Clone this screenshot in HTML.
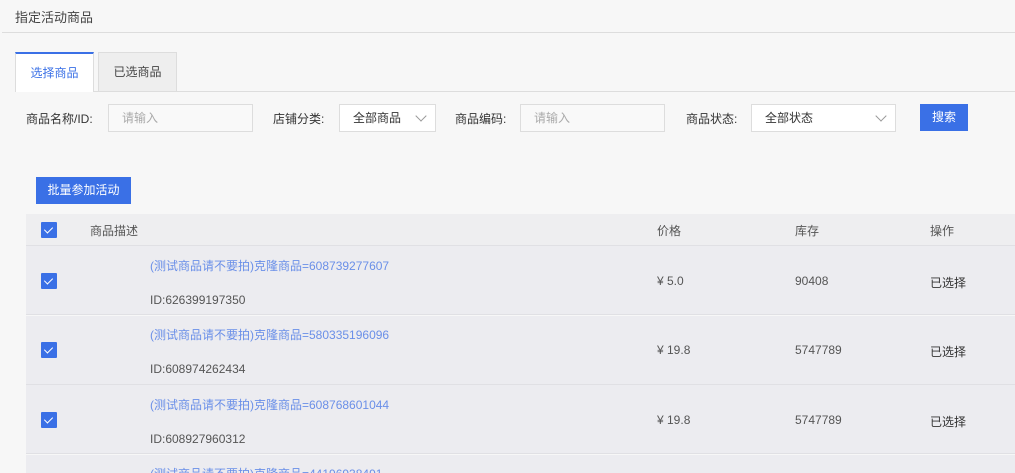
<!DOCTYPE html><html style="width:1015px;height:473px;overflow:hidden"><head><meta charset="utf-8"><style>
*{margin:0;padding:0;box-sizing:border-box}
html,body{width:1015px;height:473px;overflow:hidden}
body{background:#f7f7f7;font-family:"Liberation Sans","Noto Sans CJK SC",sans-serif;font-size:12px;color:#333;position:relative}
.a{position:absolute}
.cb{position:absolute;left:41px;width:16px;height:16px;background:#3a70e6;border-radius:1px}
.cb:after{content:"";position:absolute;left:5px;top:3px;width:4px;height:7px;border:solid #fff;border-width:0 1.5px 1.5px 0;transform:rotate(45deg)}
.inp{position:absolute;height:28px;border:1px solid #ddd;background:#f9f9f9;color:#aaa;padding-left:13px;line-height:26px}
.sel{position:absolute;height:28px;border:1px solid #ddd;background:#fff;color:#333;padding-left:13px;line-height:26px}
.sel i{position:absolute;right:10px;top:7px;width:8px;height:8px;border:solid #999;border-width:0 1px 1px 0;transform:rotate(45deg)}
.row{position:absolute;left:26px;width:989px;height:69px;background:#ececf0;border-bottom:1px solid #e0e0e4}
.t{position:absolute;left:124px;color:#6a8fe8}
.id{position:absolute;left:124px;color:#555}
</style></head><body>
<div class="a" style="left:15px;top:7px;font-size:13px;color:#444">指定活动商品</div>
<div class="a" style="left:2px;top:32px;width:1013px;height:1px;background:#ddd"></div>
<div class="a" style="left:15px;top:91px;width:1000px;height:1px;background:#ddd"></div>
<div class="a" style="left:15px;top:52px;width:79px;height:40px;background:#fff;border:1px solid #ddd;border-top:2px solid #3a70e6;border-bottom:none;color:#3a70e6;text-align:center;line-height:38px">选择商品</div>
<div class="a" style="left:98px;top:52px;width:79px;height:39px;background:#eee;border:1px solid #ddd;border-bottom:none;text-align:center;line-height:39px;color:#444">已选商品</div>
<div class="a" style="left:26px;top:110px">商品名称/ID:</div>
<div class="inp" style="left:108px;top:104px;width:145px">请输入</div>
<div class="a" style="left:273px;top:110px">店铺分类:</div>
<div class="sel" style="left:339px;top:104px;width:97px">全部商品<i></i></div>
<div class="a" style="left:455px;top:110px">商品编码:</div>
<div class="inp" style="left:520px;top:104px;width:145px">请输入</div>
<div class="a" style="left:686px;top:110px">商品状态:</div>
<div class="sel" style="left:751px;top:104px;width:145px">全部状态<i></i></div>
<div class="a" style="left:920px;top:104px;width:48px;height:27px;background:#3a70e6;color:#fff;text-align:center;line-height:27px">搜索</div>
<div class="a" style="left:36px;top:177px;width:95px;height:27px;background:#3a70e6;color:#fff;text-align:center;line-height:27px">批量参加活动</div>
<div class="a" style="left:26px;top:214px;width:989px;height:32px;background:#eeeef0;border-bottom:1px solid #e0e0e4"></div>
<div class="cb" style="top:222px"></div>
<div class="a" style="left:90px;top:222px;color:#555">商品描述</div>
<div class="a" style="left:657px;top:222px;color:#555">价格</div>
<div class="a" style="left:795px;top:222px;color:#555">库存</div>
<div class="a" style="left:930px;top:222px;color:#555">操作</div>

<div class="row" style="top:246px"><div class="t" style="top:11px">(测试商品请不要拍)克隆商品=608739277607</div><div class="id" style="top:47px">ID:626399197350</div></div>
<div class="cb" style="top:273px"></div>
<div class="a" style="left:657px;top:274px;color:#555">¥ 5.0</div><div class="a" style="left:795px;top:274px;color:#555">90408</div><div class="a" style="left:930px;top:274px">已选择</div>

<div class="row" style="top:316px"><div class="t" style="top:10px">(测试商品请不要拍)克隆商品=580335196096</div><div class="id" style="top:46px">ID:608974262434</div></div>
<div class="cb" style="top:342px"></div>
<div class="a" style="left:657px;top:343px;color:#555">¥ 19.8</div><div class="a" style="left:795px;top:343px;color:#555">5747789</div><div class="a" style="left:930px;top:343px">已选择</div>

<div class="row" style="top:385px"><div class="t" style="top:11px">(测试商品请不要拍)克隆商品=608768601044</div><div class="id" style="top:47px">ID:608927960312</div></div>
<div class="cb" style="top:412px"></div>
<div class="a" style="left:657px;top:413px;color:#555">¥ 19.8</div><div class="a" style="left:795px;top:413px;color:#555">5747789</div><div class="a" style="left:930px;top:413px">已选择</div>

<div class="row" style="top:455px;height:18px;border:none"><div class="t" style="top:10px">(测试商品请不要拍)克隆商品=44196938491</div></div>
</body></html>
